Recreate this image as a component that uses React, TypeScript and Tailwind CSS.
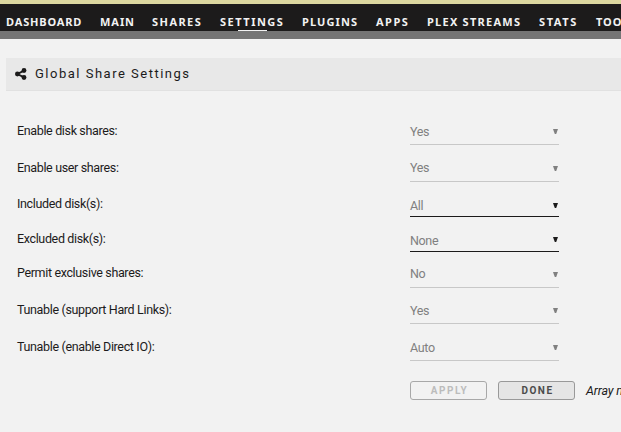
import clsx from 'clsx';

interface NavItem {
  name: string;
  width: string;
  active?: boolean;
}

interface Setting {
  label: string;
  value: string;
  enabled?: boolean;
  row: string;
  labelClass: string;
  valueClass: string;
  arrowClass: string;
}

const navItems: NavItem[] = [
  { name: 'DASHBOARD', width: 'w-[94px] tracking-[0.85px]' },
  { name: 'MAIN', width: 'w-[52px] tracking-[0.95px]' },
  { name: 'SHARES', width: 'w-[68px] tracking-[1.45px]' },
  { name: 'SETTINGS', width: 'w-[82px] tracking-[1.5px]', active: true },
  { name: 'PLUGINS', width: 'w-[74px] tracking-[1.1px]' },
  { name: 'APPS', width: 'w-[51px] tracking-[1.5px]' },
  { name: 'PLEX STREAMS', width: 'w-[112px] tracking-[1.25px]' },
  { name: 'STATS', width: 'w-[57px] tracking-[1.6px]' },
  { name: 'TOOLS', width: 'w-[60px] tracking-[0.95px]' },
];

const settings: Setting[] = [
  { label: 'Enable disk shares:', value: 'Yes', row: 'h-[37px]', labelClass: 'pb-1.5', valueClass: 'pb-1', arrowClass: 'mb-[10px]' },
  { label: 'Enable user shares:', value: 'Yes', row: 'h-[37px]', labelClass: 'pb-1.5', valueClass: 'pb-[5px]', arrowClass: 'mb-[10px]' },
  { label: 'Included disk(s):', value: 'All', enabled: true, row: 'h-[35px]', labelClass: 'pb-[5px]', valueClass: 'pb-0.5', arrowClass: 'mb-2' },
  { label: 'Excluded disk(s):', value: 'None', enabled: true, row: 'h-[35px]', labelClass: 'pb-[5px]', valueClass: 'pb-0.5', arrowClass: 'mb-[9px]' },
  { label: 'Permit exclusive shares:', value: 'No', row: 'h-[36px]', labelClass: 'pb-[7px]', valueClass: 'pb-[5px]', arrowClass: 'mb-[10px]' },
  { label: 'Tunable (support Hard Links):', value: 'Yes', row: 'h-[36px]', labelClass: 'pb-1.5', valueClass: 'pb-1', arrowClass: 'mb-[10px]' },
  { label: 'Tunable (enable Direct IO):', value: 'Auto', row: 'h-[37px]', labelClass: 'pb-1.5', valueClass: 'pb-1', arrowClass: 'mb-[10px]' },
];

function ShareIcon() {
  return (
    <svg width="12" height="12" viewBox="0 0 12 12" className="text-[#1c1b1b]">
      <path d="M9 2.6 2.5 6 9 9.4" fill="none" stroke="currentColor" strokeWidth="1.9" />
      <circle cx="2.4" cy="6" r="2.4" fill="currentColor" />
      <circle cx="9" cy="2.5" r="2.4" fill="currentColor" />
      <circle cx="9" cy="9.5" r="2.4" fill="currentColor" />
    </svg>
  );
}

function SettingRow({ setting }: { setting: Setting }) {
  return (
    <div className={clsx('flex items-end', setting.row)}>
      <label className={clsx('w-[393px] shrink-0 leading-4 tracking-[-0.35px]', setting.labelClass)}>{setting.label}</label>
      <div
        className={clsx(
          'flex w-[149px] items-end justify-between border-b text-[#808080]',
          setting.enabled ? 'border-[#1c1b1b]' : 'border-[#c8c8c8]'
        )}
      >
        <span className={clsx('leading-4 tracking-[-0.35px]', setting.valueClass)}>{setting.value}</span>
        <svg
          width="5"
          height="5"
          viewBox="0 0 5 5"
          className={clsx('mr-px', setting.arrowClass, setting.enabled ? 'text-[#1c1b1b]' : 'text-[#808080]')}
        >
          <path d="M0 0h5L3.2 5H1.8z" fill="currentColor" />
        </svg>
      </div>
    </div>
  );
}

export default function App() {
  return (
    <div className="h-[432px] w-[621px] overflow-hidden bg-[#f2f2f2] font-['Roboto',sans-serif] text-[12.5px] tracking-[-0.15px] text-[#1c1b1b]">
      <div className="h-1 bg-[#dcd7a0]" />
      <nav className="flex h-[27px] items-end bg-[#1c1b1b] pl-1.5 font-['Noto_Sans',sans-serif] text-[11px] font-bold text-[#f2f2f2]">
        {navItems.map(item => (
          <div key={item.name} className={clsx('flex shrink-0 flex-col whitespace-nowrap', item.width)}>
            <span className="leading-4">{item.name}</span>
            <span className={clsx('ml-[18px] h-px w-[29px]', item.active && 'bg-[#f2f2f2]')} />
          </div>
        ))}
      </nav>
      <div className="h-2 bg-[#757575]" />

      <main className="pt-[19px]">
        <header className="ml-1.5 flex h-[33px] items-center border-b border-[#e1e1e1] bg-[#e8e8e8] pl-[9px]">
          <ShareIcon />
          <h1 className="ml-2 text-[13px] leading-4 tracking-[1.5px]">Global Share Settings</h1>
        </header>

        <form className="pt-[17px] pl-[17px]">
          {settings.map(setting => (
            <SettingRow key={setting.label} setting={setting} />
          ))}
          <div className="mt-5 ml-[393px] flex items-center whitespace-nowrap">
            <button type="button" className="h-[19px] w-[77px] shrink-0 rounded-[3px] border border-[#a8a8a8] pl-0.5 text-[10px] font-bold tracking-[1.5px] text-[#bcbcbc]">
              APPLY
            </button>
            <button type="button" className="ml-[11px] h-[19px] w-[77px] shrink-0 rounded-[3px] border border-[#999] bg-[#e5e5e5] pl-0.5 text-[10px] font-bold tracking-[1.5px] text-[#4b4b4b]">
              DONE
            </button>
            <span className="ml-[11px] leading-4 italic">Array must be Stopped to change</span>
          </div>
        </form>
      </main>
    </div>
  );
}
